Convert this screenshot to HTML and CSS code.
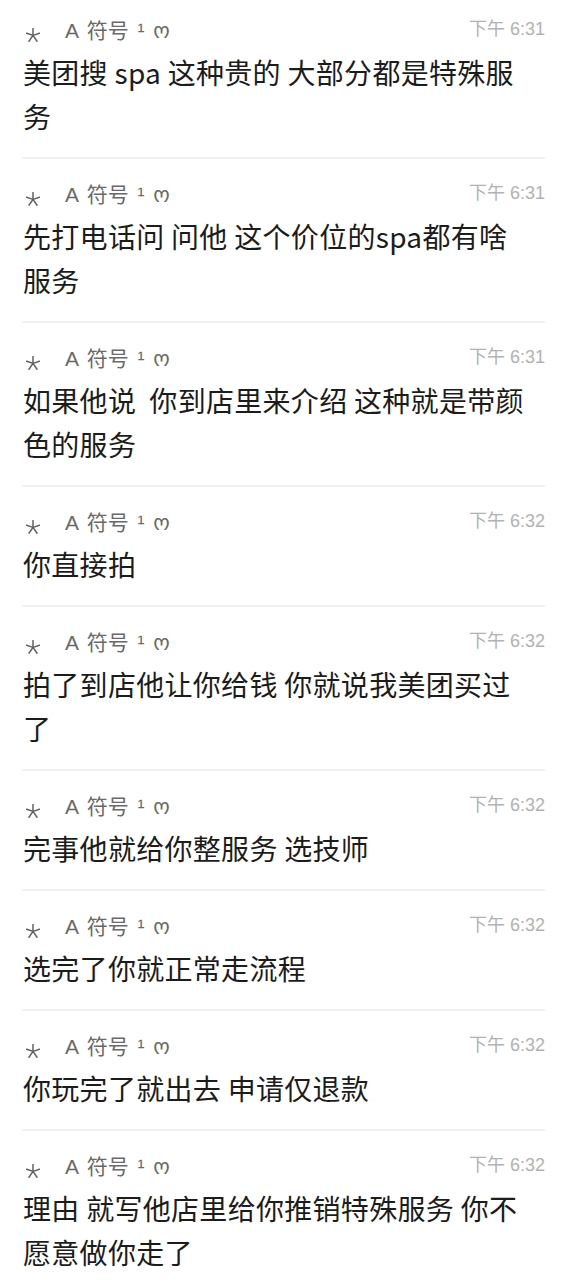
FILE: index.html
```html
<!DOCTYPE html>
<html lang="zh-CN">
<head>
<meta charset="utf-8">
<title>消息</title>
<link rel="stylesheet" href="styles.css">
</head>
<body>
<svg class="defs" width="0" height="0" aria-hidden="true">
  <symbol id="ast" viewBox="0 0 14 14">
    <g stroke="currentColor" stroke-width="1.5" stroke-linecap="round" fill="none">
      <line x1="7" y1="7.4" x2="7" y2="0.6"/>
      <line x1="7" y1="7.4" x2="13.4" y2="5.3"/>
      <line x1="7" y1="7.4" x2="0.6" y2="5.3"/>
      <line x1="7" y1="7.4" x2="11" y2="13.2"/>
      <line x1="7" y1="7.4" x2="3" y2="13.2"/>
    </g>
  </symbol>
</svg>
<main class="list">
  <article class="msg first">
    <header class="msg-head"><span class="who"><svg class="star"><use href="#ast"/></svg><span class="name">A 符号 ¹ ო</span></span><time class="time">下午 6:31</time></header>
    <p class="text">美团搜 spa 这种贵的 大部分都是特殊服<br>务</p>
  </article>
  <article class="msg">
    <header class="msg-head"><span class="who"><svg class="star"><use href="#ast"/></svg><span class="name">A 符号 ¹ ო</span></span><time class="time">下午 6:31</time></header>
    <p class="text">先打电话问 问他 这个价位的spa都有啥<br>服务</p>
  </article>
  <article class="msg">
    <header class="msg-head"><span class="who"><svg class="star"><use href="#ast"/></svg><span class="name">A 符号 ¹ ო</span></span><time class="time">下午 6:31</time></header>
    <p class="text">如果他说&nbsp; 你到店里来介绍 这种就是带颜<br>色的服务</p>
  </article>
  <article class="msg">
    <header class="msg-head"><span class="who"><svg class="star"><use href="#ast"/></svg><span class="name">A 符号 ¹ ო</span></span><time class="time">下午 6:32</time></header>
    <p class="text">你直接拍</p>
  </article>
  <article class="msg">
    <header class="msg-head"><span class="who"><svg class="star"><use href="#ast"/></svg><span class="name">A 符号 ¹ ო</span></span><time class="time">下午 6:32</time></header>
    <p class="text">拍了到店他让你给钱 你就说我美团买过<br>了</p>
  </article>
  <article class="msg">
    <header class="msg-head"><span class="who"><svg class="star"><use href="#ast"/></svg><span class="name">A 符号 ¹ ო</span></span><time class="time">下午 6:32</time></header>
    <p class="text">完事他就给你整服务 选技师</p>
  </article>
  <article class="msg">
    <header class="msg-head"><span class="who"><svg class="star"><use href="#ast"/></svg><span class="name">A 符号 ¹ ო</span></span><time class="time">下午 6:32</time></header>
    <p class="text">选完了你就正常走流程</p>
  </article>
  <article class="msg">
    <header class="msg-head"><span class="who"><svg class="star"><use href="#ast"/></svg><span class="name">A 符号 ¹ ო</span></span><time class="time">下午 6:32</time></header>
    <p class="text">你玩完了就出去 申请仅退款</p>
  </article>
  <article class="msg">
    <header class="msg-head"><span class="who"><svg class="star"><use href="#ast"/></svg><span class="name">A 符号 ¹ ო</span></span><time class="time">下午 6:32</time></header>
    <p class="text">理由 就写他店里给你推销特殊服务 你不<br>愿意做你走了</p>
  </article>
</main>
</body>
</html>
```
FILE: styles.css
```css
html, body {
  margin: 0;
  padding: 0;
  background: #ffffff;
}

body {
  font-family: "Noto Sans CJK SC", "Noto Sans", "DejaVu Sans", sans-serif;
  color: #1c1c1c;
}

.defs {
  position: absolute;
  width: 0;
  height: 0;
  overflow: hidden;
}

.list {
  margin: 0 28px 0 22px;
}

.msg {
  padding: 22px 0 19px 1px;
  border-bottom: 2px solid #f0f0f0;
}

.msg.first {
  padding-top: 17px;
}

.msg-head {
  display: flex;
  justify-content: space-between;
  align-items: flex-start;
  height: 28px;
  margin-bottom: 5px;
}

.who {
  display: flex;
  align-items: center;
  height: 28px;
  color: #6a6a6a;
  font-size: 21px;
  line-height: 28px;
}

.star {
  width: 14px;
  height: 14px;
  margin: 7px 25px 0 3px;
  color: #626262;
  flex: none;
}

.name {
  font-family: "Liberation Sans", "Noto Sans CJK SC", "DejaVu Sans", sans-serif;
  white-space: pre;
  word-spacing: 3px;
}

.time {
  font-family: "Liberation Sans", "Noto Sans CJK SC", sans-serif;
  font-size: 18px;
  line-height: 18px;
  color: #b2b2b2;
  padding-top: 3px;
}

.text {
  margin: 0;
  font-size: 28px;
  line-height: 44px;
  letter-spacing: 0.3px;
}
```
